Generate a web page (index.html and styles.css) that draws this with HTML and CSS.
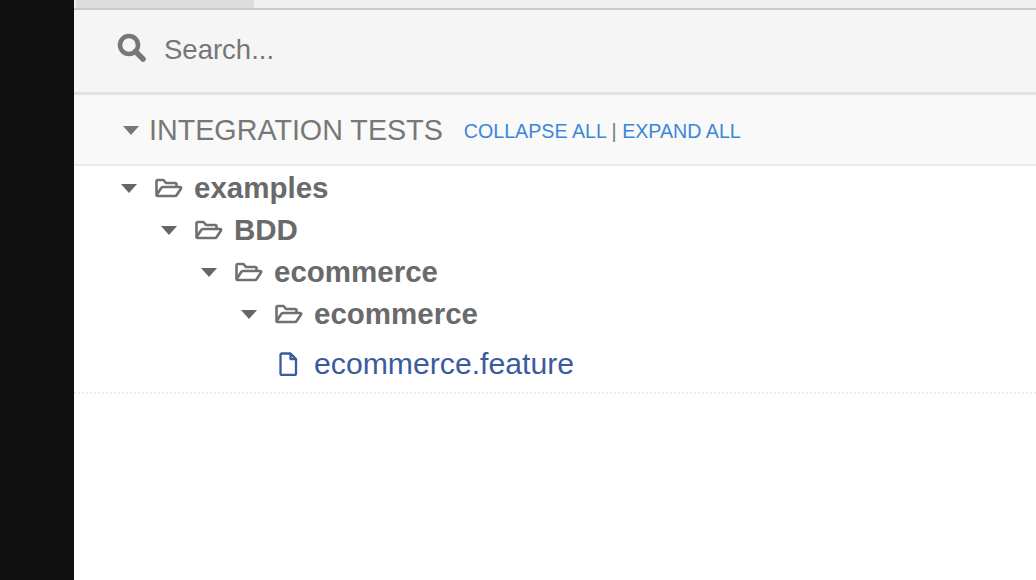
FILE: index.html
```html
<!DOCTYPE html>
<html lang="en">
<head>
	<meta charset="UTF-8">
	<title>Integration tests</title>
	<link rel="stylesheet" href="styles.css">
</head>
<body>
	<svg class="defs" width="0" height="0">
		<symbol id="folder" viewBox="0 0 28 20"><path d="M1.500 17V3.500C1.500 2.500 2.100 2 3 2H8.500l2.500 3H20c1 0 1.500.6 1.500 1.500V9M1.500 17c0 .6.5 1 1 1h17.500c.8 0 1.300-.4 1.700-1L26 10.500c.4-.8 0-1.500-1-1.500H8c-.8 0-1.400.4-1.800 1L1.800 16.700" fill="none" stroke="#707070" stroke-width="2.600" stroke-linejoin="round"/></symbol>
	</svg>
	<div class="rail"></div>
	<div class="main">
		<div class="tabs"><div class="tab"></div></div>
		<div class="search">
			<svg class="search-icon" viewBox="0 0 30 30"><circle cx="12" cy="12" r="9" fill="none" stroke="#777" stroke-width="4.500"/><path d="M18.500 18.500l7.500 7.500" stroke="#777" stroke-width="5.500" stroke-linecap="round"/></svg>
			<span class="search-text">Search...</span>
		</div>
		<div class="head">
			<i class="caret head-caret"></i>
			<span class="head-title">INTEGRATION TESTS</span>
			<span class="head-links"><a>COLLAPSE ALL</a> | <a>EXPAND ALL</a></span>
		</div>
		<ul class="tree">
			<li class="row lvl0"><i class="caret"></i><svg class="folder"><use href="#folder"/></svg><span>examples</span></li>
			<li class="row lvl1"><i class="caret"></i><svg class="folder"><use href="#folder"/></svg><span>BDD</span></li>
			<li class="row lvl2"><i class="caret"></i><svg class="folder"><use href="#folder"/></svg><span>ecommerce</span></li>
			<li class="row lvl3"><i class="caret"></i><svg class="folder"><use href="#folder"/></svg><span>ecommerce</span></li>
			<li class="file"><svg class="file-icon" viewBox="0 0 20 24"><path d="M2.500 3C2.500 2 3.100 1.500 4 1.500H12.500l5.500 5.500v14.500c0 1-.6 1.500-1.500 1.500H4c-.9 0-1.500-.5-1.500-1.500zM12.500 1.500V7H18" fill="none" stroke="#3c5b9e" stroke-width="2.300" stroke-linejoin="round"/></svg><span>ecommerce.feature</span></li>
		</ul>
	</div>
</body>
</html>
```

FILE: styles.css
```css
* {
	margin: 0;
	padding: 0;
	box-sizing: border-box;
}
html, body {
	height: 100%;
}
body {
	display: flex;
	overflow: hidden;
	background: #fff;
	color: #6a6a6a;
	font-family: "Liberation Sans", Arial, sans-serif;
}
.defs {
	display: none;
}
.rail {
	width: 74px;
	flex: none;
	background: #101010;
}
.main {
	flex: 1;
	min-width: 0;
}
.tabs {
	height: 10px;
	background: #f0f0f0;
	border-bottom: 2px solid #c8c8c8;
	padding-left: 2px;
}
.tab {
	width: 178px;
	height: 8px;
	background: #dcdcdc;
}
.search {
	height: 85px;
	display: flex;
	align-items: center;
	padding: 0 0 2px 43px;
	background: #f5f5f5;
	border-bottom: 3px solid #e2e2e2;
}
.search-icon {
	width: 30px;
	height: 30px;
	margin: 0 17px 4px 0;
}
.search-text {
	font-size: 27.500px;
	color: #767676;
}
.head {
	height: 71px;
	display: flex;
	align-items: center;
	padding: 2px 0 0 49px;
	background: #f9f9f9;
	border-bottom: 2px solid #ececec;
}
.caret {
	display: block;
	flex: none;
	width: 0;
	height: 0;
	border-left: 8px solid transparent;
	border-right: 8px solid transparent;
	border-top: 9px solid #666;
}
.head-caret {
	border-top-color: #777;
	margin-right: 10px;
}
.head-title {
	font-size: 28.700px;
	color: #777;
}
.head-links {
	font-size: 19.650px;
	color: #777;
	margin-left: 21px;
	padding-top: 2px;
}
.head-links a {
	color: #3a87d8;
}
.tree {
	list-style: none;
	padding: 1px 0 7px;
	border-bottom: 2px dotted #eee;
}
.row {
	height: 42px;
	display: flex;
	align-items: center;
	font-size: 29.500px;
	font-weight: bold;
}
.row .caret {
	margin-right: 18px;
}
.lvl0 { padding-left: 47px; }
.lvl1 { padding-left: 87px; }
.lvl2 { padding-left: 127px; }
.lvl3 { padding-left: 167px; }
.folder {
	width: 28px;
	height: 20px;
	margin-right: 11px;
}
.file {
	height: 50px;
	display: flex;
	align-items: center;
	padding: 8px 0 0 204px;
	font-size: 30.200px;
	color: #3c5b9e;
}
.file-icon {
	width: 20px;
	height: 24px;
	margin-right: 16px;
}
```
